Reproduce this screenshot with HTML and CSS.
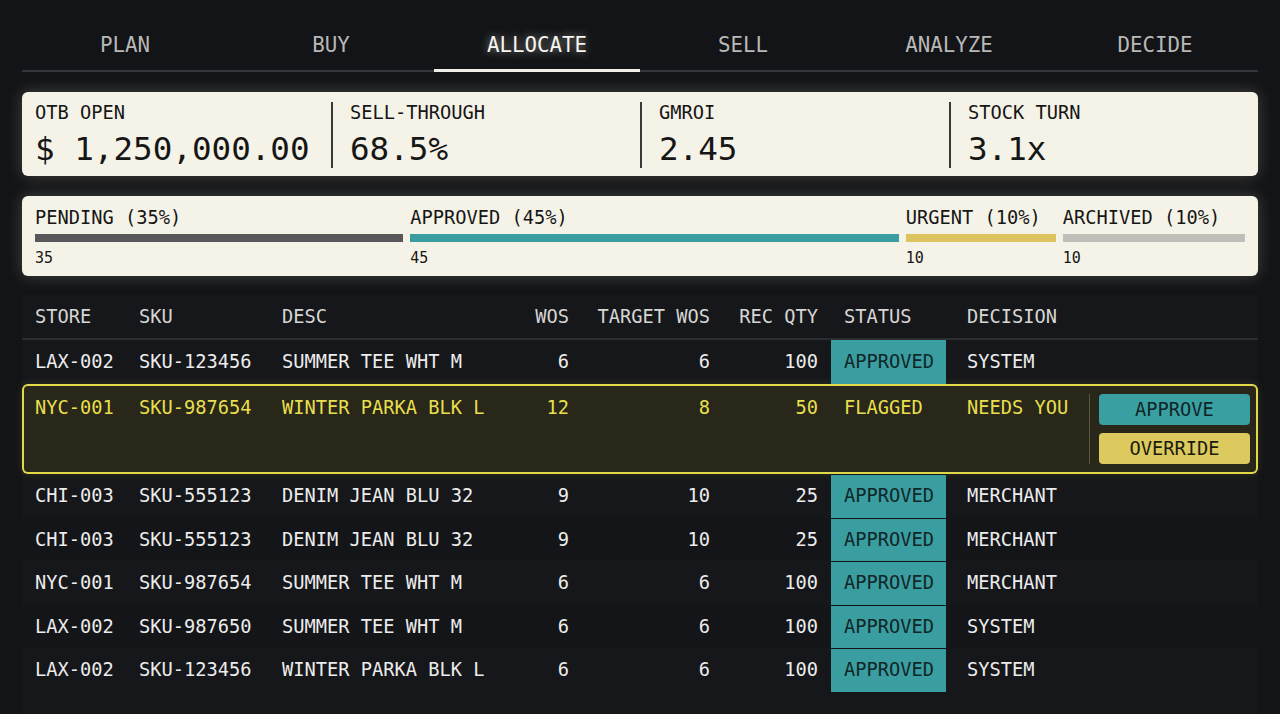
FILE: index.html
```html
<!DOCTYPE html>
<html>
<head>
<meta charset="utf-8">
<link rel="stylesheet" href="styles.css">
</head>
<body>
<div class="page">
  <nav class="tabs">
    <div class="tab">PLAN</div>
    <div class="tab">BUY</div>
    <div class="tab active">ALLOCATE</div>
    <div class="tab">SELL</div>
    <div class="tab">ANALYZE</div>
    <div class="tab">DECIDE</div>
  </nav>

  <section class="card kpis">
    <div class="kpi"><div class="kpi-label">OTB OPEN</div><div class="kpi-value">$ 1,250,000.00</div></div>
    <div class="kpi"><div class="kpi-label">SELL-THROUGH</div><div class="kpi-value">68.5%</div></div>
    <div class="kpi"><div class="kpi-label">GMROI</div><div class="kpi-value">2.45</div></div>
    <div class="kpi"><div class="kpi-label">STOCK TURN</div><div class="kpi-value">3.1x</div></div>
  </section>

  <section class="card statusbar">
    <div class="seg" style="flex: 368 1 0"><div class="seg-label">PENDING (35%)</div><div class="bar pending"></div><div class="seg-num">35</div></div>
    <div class="seg" style="flex: 488 1 0"><div class="seg-label">APPROVED (45%)</div><div class="bar approved"></div><div class="seg-num">45</div></div>
    <div class="seg" style="flex: 150 1 0"><div class="seg-label">URGENT (10%)</div><div class="bar urgent"></div><div class="seg-num">10</div></div>
    <div class="seg" style="flex: 182 1 0"><div class="seg-label">ARCHIVED (10%)</div><div class="bar archived"></div><div class="seg-num">10</div></div>
  </section>

  <section class="table">
    <div class="row head">
      <div class="c first">STORE</div><div class="c">SKU</div><div class="c">DESC</div>
      <div class="c num">WOS</div><div class="c num">TARGET WOS</div><div class="c num">REC QTY</div>
      <div class="c status-h">STATUS</div><div class="c dec">DECISION</div><div class="c"></div>
    </div>
    <div class="row">
      <div class="c first">LAX-002</div><div class="c">SKU-123456</div><div class="c">SUMMER TEE WHT M</div>
      <div class="c num">6</div><div class="c num">6</div><div class="c num">100</div>
      <div class="c status">APPROVED</div><div class="c dec">SYSTEM</div><div class="c"></div>
    </div>
    <div class="row flagged">
      <div class="c first">NYC-001</div><div class="c">SKU-987654</div><div class="c">WINTER PARKA BLK L</div>
      <div class="c num">12</div><div class="c num">8</div><div class="c num">50</div>
      <div class="c status-h">FLAGGED</div><div class="c dec">NEEDS YOU</div>
      <div class="actions">
        <button class="btn approve">APPROVE</button>
        <button class="btn override">OVERRIDE</button>
      </div>
    </div>
    <div class="row">
      <div class="c first">CHI-003</div><div class="c">SKU-555123</div><div class="c">DENIM JEAN BLU 32</div>
      <div class="c num">9</div><div class="c num">10</div><div class="c num">25</div>
      <div class="c status">APPROVED</div><div class="c dec">MERCHANT</div><div class="c"></div>
    </div>
    <div class="row alt">
      <div class="c first">CHI-003</div><div class="c">SKU-555123</div><div class="c">DENIM JEAN BLU 32</div>
      <div class="c num">9</div><div class="c num">10</div><div class="c num">25</div>
      <div class="c status">APPROVED</div><div class="c dec">MERCHANT</div><div class="c"></div>
    </div>
    <div class="row">
      <div class="c first">NYC-001</div><div class="c">SKU-987654</div><div class="c">SUMMER TEE WHT M</div>
      <div class="c num">6</div><div class="c num">6</div><div class="c num">100</div>
      <div class="c status">APPROVED</div><div class="c dec">MERCHANT</div><div class="c"></div>
    </div>
    <div class="row alt">
      <div class="c first">LAX-002</div><div class="c">SKU-987650</div><div class="c">SUMMER TEE WHT M</div>
      <div class="c num">6</div><div class="c num">6</div><div class="c num">100</div>
      <div class="c status">APPROVED</div><div class="c dec">SYSTEM</div><div class="c"></div>
    </div>
    <div class="row">
      <div class="c first">LAX-002</div><div class="c">SKU-123456</div><div class="c">WINTER PARKA BLK L</div>
      <div class="c num">6</div><div class="c num">6</div><div class="c num">100</div>
      <div class="c status">APPROVED</div><div class="c dec">SYSTEM</div><div class="c"></div>
    </div>
  </section>
</div>
</body>
</html>
```

FILE: styles.css
```css
html, body {
  margin: 0;
  padding: 0;
  background: #131417;
  height: 714px;
  overflow: hidden;
}
body {
  font-family: "DejaVu Sans Mono", "Liberation Mono", monospace;
  color: #ececec;
}
.page {
  padding: 0 22px;
}

/* tabs */
.tabs {
  display: grid;
  grid-template-columns: repeat(6, 1fr);
  height: 72px;
  box-shadow: inset 0 -2px 0 #34353a;
}
.tab {
  height: 72px;
  padding-top: 20px;
  box-sizing: border-box;
  display: flex;
  align-items: center;
  justify-content: center;
  font-size: 20.8px;
  color: #b8b8b6;
  border-bottom: 3px solid transparent;
}
.tab.active {
  color: #f6f5ee;
  text-shadow: 0 0 8px rgba(255, 255, 240, 0.55);
  border-bottom-color: #efeee6;
}

/* cards */
.card {
  background: #f5f3e7;
  border-radius: 6px;
  color: #161616;
  box-shadow: 0 0 16px rgba(245, 240, 215, 0.22);
}
.kpis {
  margin-top: 20px;
  height: 84px;
  box-sizing: border-box;
  padding: 10px 0 8px;
  display: grid;
  grid-template-columns: repeat(4, 1fr);
}
.kpi {
  padding-left: 17px;
  border-left: 2px solid #3a3a38;
}
.kpi:first-child {
  padding-left: 13px;
  border-left: none;
}
.kpi-label {
  font-size: 18.7px;
  line-height: 22px;
}
.kpi-value {
  margin-top: 6px;
  font-size: 32.6px;
  line-height: 38px;
}

.statusbar {
  margin-top: 20px;
  height: 80px;
  box-sizing: border-box;
  padding: 11px 13px 9px;
  display: flex;
  gap: 7px;
}
.seg {
  min-width: 0;
}
.seg-label {
  font-size: 18.7px;
  line-height: 22px;
  white-space: nowrap;
}
.bar {
  margin-top: 5px;
  height: 8px;
}
.bar.pending { background: #58585b; }
.bar.approved { background: #3a9d9f; }
.bar.urgent { background: #dcc35f; }
.bar.archived { background: #bfbeb8; }
.seg-num {
  margin-top: 7px;
  font-size: 15px;
  line-height: 18px;
}

/* table */
.table {
  margin-top: 19px;
  background: #16171a;
  height: 419px;
}
.row {
  display: grid;
  grid-template-columns: 104px 143px 250px 63px 141px 108px 115px 143px 1fr;
  height: 43.5px;
  font-size: 18.7px;
  line-height: 43.5px;
  white-space: nowrap;
}
.row.alt {
  background: #141518;
}
.row.head {
  height: 45px;
  line-height: 43px;
  color: #d6d6d4;
  border-bottom: 2px solid #2c2d31;
  box-sizing: border-box;
}
.row:nth-child(2) {
  height: 44px;
  line-height: 44px;
}
.c {
  padding-left: 13px;
  overflow: hidden;
}
.c.num {
  padding-left: 0;
  padding-right: 13px;
  text-align: right;
}
.c.dec {
  padding-left: 21px;
}
.c.status {
  background: #3a9d9f;
  color: #102627;
  border-top: 1px solid #121316;
  line-height: 42.5px;
}
.row:nth-child(2) .c.status {
  border-top: none;
  line-height: 44px;
}

.row.flagged {
  height: 90px;
  line-height: 44px;
  padding-top: 2px;
  box-sizing: border-box;
  background: #28271a;
  color: #e8df4d;
  border-radius: 6px;
  box-shadow: inset 0 0 0 2px #e2d94a, 0 0 10px rgba(226, 217, 74, 0.12);
}
.actions {
  margin: 8px 0 10px;
  border-left: 1px solid #5a5740;
  padding: 0 8px 0 9px;
  display: flex;
  flex-direction: column;
  gap: 8px;
}
.btn {
  height: 31px;
  border: none;
  border-radius: 4px;
  font-family: "DejaVu Sans Mono", "Liberation Mono", monospace;
  font-size: 18.7px;
  padding: 0;
}
.btn.approve {
  background: #3a9fa1;
  color: #0f2526;
}
.btn.override {
  background: #dcca5e;
  color: #1b1a10;
}
```
